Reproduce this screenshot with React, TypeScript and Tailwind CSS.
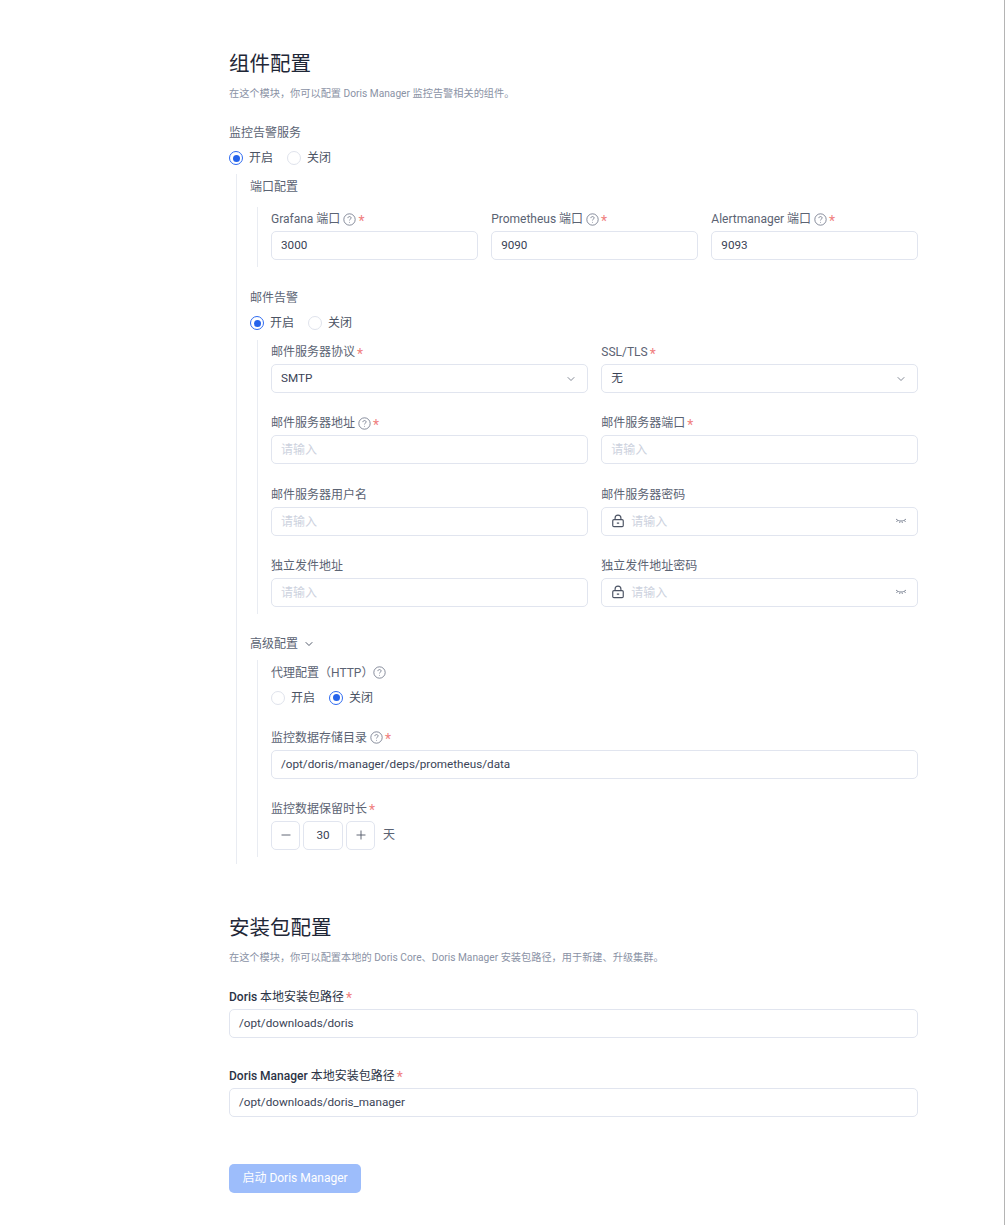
import React from 'react';
import { ChevronDown, Minus, Plus } from 'lucide-react';

const inputBox = 'flex h-[29px] items-center rounded-[5px] border border-[#e1e5ef] bg-white px-[9px] text-[11.7px] text-[#3a4356]';

const Help = () => (
  <svg viewBox="0 0 16 16" className="h-[13px] w-[13px] shrink-0 text-[#6b7385]" fill="none" stroke="currentColor">
    <circle cx="8" cy="8" r="7" strokeWidth="1" />
    <path d="M6 6.3c0-1.2.9-1.9 2-1.9s2 .7 2 1.7c0 1.5-2 1.5-2 3" strokeWidth="1" />
    <circle cx="8" cy="11.4" r=".6" fill="currentColor" stroke="none" />
  </svg>
);

const Label = ({ text, help, required, strong }: { text: React.ReactNode; help?: boolean; required?: boolean; strong?: boolean }) => (
  <div className={`flex h-[18px] items-center text-[12px] ${strong ? 'text-[#2b3345]' : 'text-[#5b6373]'}`}>
    <span>{text}</span>
    {help && <span className="ml-[3px]"><Help /></span>}
    {required && <span className="ml-[2px] pt-[3px] text-[14px] leading-none text-[#f08080]">*</span>}
  </div>
);

const Radio = ({ label, checked }: { label: string; checked?: boolean }) => (
  <div className="flex items-center gap-[6px]">
    <span className={`flex h-[14px] w-[14px] items-center justify-center rounded-full border bg-white ${checked ? 'border-[#2f6bf0]' : 'border-[#dfe3ec]'}`}>
      {checked && <span className="h-[7px] w-[7px] rounded-full bg-[#2563eb]" />}
    </span>
    <span className="text-[12px] text-[#4b5363]">{label}</span>
  </div>
);

const RadioGroup = ({ on }: { on: boolean }) => (
  <div className="flex h-[18px] items-center gap-[14px]">
    <Radio label="开启" checked={on} />
    <Radio label="关闭" checked={!on} />
  </div>
);

const Field = ({ label, help, required, value, placeholder }: { label: string; help?: boolean; required?: boolean; value?: string; placeholder?: string }) => (
  <div className="flex min-w-0 flex-col gap-[3px]">
    <Label text={label} help={help} required={required} />
    <div className={inputBox}>
      {value ?? <span className="pt-[1px] text-[12px] text-[#cdd2de]">{placeholder}</span>}
    </div>
  </div>
);

const SelectField = ({ label, value }: { label: string; value: string }) => (
  <div className="flex min-w-0 flex-col gap-[3px]">
    <Label text={label} required />
    <div className={`${inputBox} justify-between`}>
      <span>{value}</span>
      <ChevronDown className="mr-[1px] h-[12px] w-[12px] text-[#5b6373]" strokeWidth={1.5} />
    </div>
  </div>
);

const PasswordField = ({ label }: { label: string }) => (
  <div className="flex min-w-0 flex-col gap-[3px]">
    <Label text={label} />
    <div className={inputBox}>
      <svg viewBox="0 0 12 12" className="mr-[6px] h-[14px] w-[14px] text-[#4b5363]" fill="none" stroke="currentColor" strokeWidth="1">
        <rect x="1.5" y="4.8" width="9" height="6" rx="1" />
        <path d="M3.5 4.8V3.5a2.5 2.5 0 0 1 5 0v1.3M5 7.8h2" />
      </svg>
      <span className="pt-[1px] text-[12px] text-[#cdd2de]">请输入</span>
      <svg viewBox="0 0 12 8" className="mr-[1px] ml-auto h-[8px] w-[12px] text-[#6b7385]" fill="none" stroke="currentColor" strokeWidth="0.8">
        <path d="M1 2c2.5 2.6 7.5 2.6 10 0M2.5 3.5 1.5 5M5 4.4 4.6 6M7 4.4 7.4 6M9.5 3.5l1 1.5" />
      </svg>
    </div>
  </div>
);

const Section = ({ title, desc }: { title: string; desc: string }) => (
  <div>
    <h2 className="text-[20.5px] leading-[30px] font-normal text-[#1f2737]">{title}</h2>
    <p className="mt-[7px] text-[10.2px] leading-[15px] text-[#8a92a5]">{desc}</p>
  </div>
);

const Nested = ({ className, children }: { className: string; children: React.ReactNode }) => (
  <div className={`border-l border-[#e9ecf2] ${className}`}>{children}</div>
);

export default function App() {
  return (
    <div
      className="min-h-[1225px] w-full border-r border-[#b4b4b4] bg-white pt-[49px] pl-[229px]"
      style={{ fontFamily: 'Roboto, "Noto Sans CJK SC", sans-serif' }}
    >
      <div className="w-[689px]">
        <Section title="组件配置" desc="在这个模块，你可以配置 Doris Manager 监控告警相关的组件。" />

        <div className="mt-[23px]"><Label text="监控告警服务" /></div>
        <div className="mt-[7px]"><RadioGroup on /></div>

        <Nested className="mt-[7px] ml-[7px] pt-[4px] pb-[7px] pl-[13px]">
          <Label text="端口配置" />
          <Nested className="mt-[11px] ml-[7px] pt-[3px] pb-[7px] pl-[13px]">
            <div className="grid grid-cols-3 gap-[13.5px]">
              <Field label="Grafana 端口" help required value="3000" />
              <Field label="Prometheus 端口" help required value="9090" />
              <Field label="Alertmanager 端口" help required value="9093" />
            </div>
          </Nested>

          <div className="mt-[22px]"><Label text="邮件告警" /></div>
          <div className="mt-[7px]"><RadioGroup on /></div>
          <Nested className="mt-[8px] ml-[7px] pt-[3px] pb-[7px] pl-[13px]">
            <div className="grid grid-cols-2 gap-x-[13.5px] gap-y-[21.3px]">
              <SelectField label="邮件服务器协议" value="SMTP" />
              <SelectField label="SSL/TLS" value="无" />
              <Field label="邮件服务器地址" help required placeholder="请输入" />
              <Field label="邮件服务器端口" required placeholder="请输入" />
              <Field label="邮件服务器用户名" placeholder="请输入" />
              <PasswordField label="邮件服务器密码" />
              <Field label="独立发件地址" placeholder="请输入" />
              <PasswordField label="独立发件地址密码" />
            </div>
          </Nested>

          <div className="mt-[21px] flex h-[18px] items-center gap-[5px] text-[12px] text-[#5b6373]">
            高级配置 <ChevronDown className="h-[12px] w-[12px] text-[#3a4356]" strokeWidth={1.75} />
          </div>
          <Nested className="mt-[7px] ml-[7px] pt-[4px] pb-[7px] pl-[13px]">
            <div className="flex h-[18px] items-center text-[12px] text-[#5b6373]">
              代理配置（HTTP）<Help />
            </div>
            <div className="mt-[7px]"><RadioGroup on={false} /></div>
            <div className="mt-[22px]">
              <Field label="监控数据存储目录" help required value="/opt/doris/manager/deps/prometheus/data" />
            </div>
            <div className="mt-[21px]"><Label text="监控数据保留时长" required /></div>
            <div className="mt-[3px] flex items-center gap-[3px]">
              <div className="flex h-[29px] w-[29px] items-center justify-center rounded-[5px] border border-[#e1e5ef] text-[#4b5363]"><Minus className="h-[14px] w-[14px]" strokeWidth={1.5} /></div>
              <div className="flex h-[29px] w-[40px] items-center justify-center rounded-[5px] border border-[#e1e5ef] text-[11.7px] text-[#3a4356]">30</div>
              <div className="flex h-[29px] w-[29px] items-center justify-center rounded-[5px] border border-[#e1e5ef] text-[#4b5363]"><Plus className="h-[14px] w-[14px]" strokeWidth={1.5} /></div>
              <span className="ml-[5px] text-[12px] text-[#5b6373]">天</span>
            </div>
          </Nested>
        </Nested>

        <div className="mt-[49px]">
          <Section title="安装包配置" desc="在这个模块，你可以配置本地的 Doris Core、Doris Manager 安装包路径，用于新建、升级集群。" />
        </div>

        <div className="mt-[23px] flex flex-col gap-[3px]">
          <Label strong text={<><span className="font-medium">Doris</span> 本地安装包路径</>} required />
          <div className={inputBox}>/opt/downloads/doris</div>
        </div>
        <div className="mt-[29px] flex flex-col gap-[3px]">
          <Label strong text={<><span className="font-medium">Doris Manager</span> 本地安装包路径</>} required />
          <div className={inputBox}>/opt/downloads/doris_manager</div>
        </div>

        <button className="mt-[47px] h-[29px] w-[132px] rounded-[5px] bg-[#9dbdfb] text-[12px] text-white">启动 Doris Manager</button>
      </div>
    </div>
  );
}
